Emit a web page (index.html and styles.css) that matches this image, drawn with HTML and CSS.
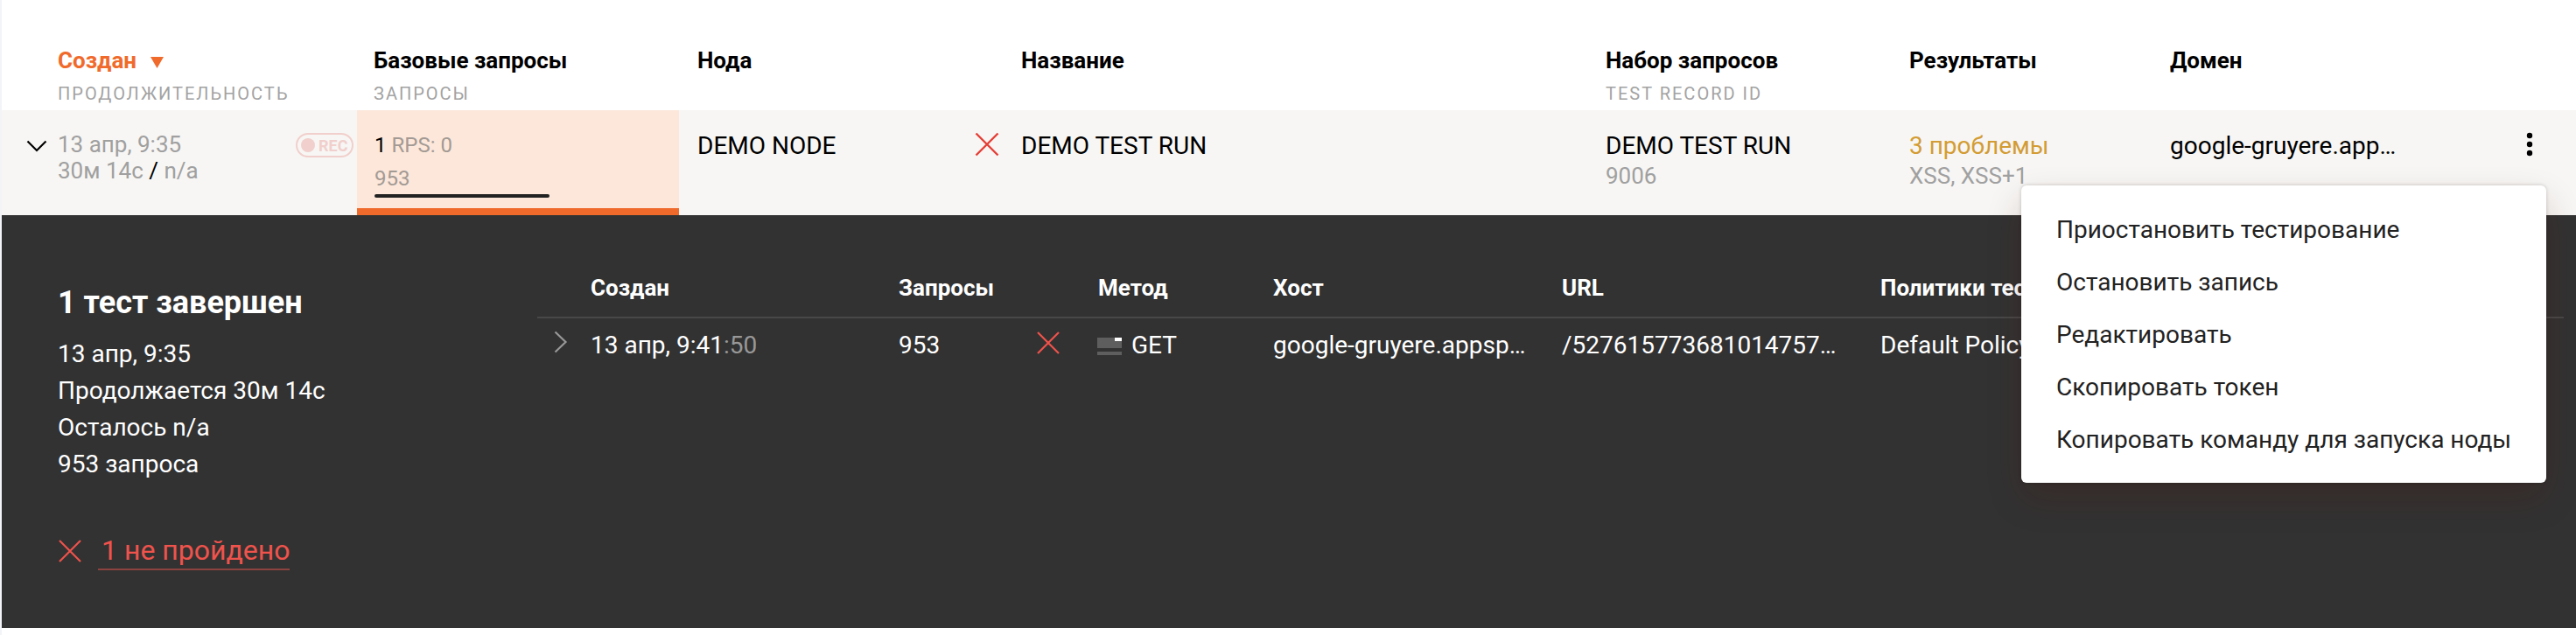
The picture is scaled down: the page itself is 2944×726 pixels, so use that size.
FILE: index.html
```html
<!DOCTYPE html>
<html lang="ru">
<head>
<meta charset="utf-8">
<title>Тесты</title>
<link rel="stylesheet" href="styles.css">
</head>
<body>
<div class="page">
  <div class="grid head">
    <div class="col-1"><div class="th sorted">Создан<svg class="sort" width="15" height="13" viewBox="0 0 15 13"><path d="M0 0H15L7.500 13Z" fill="#f06a2c"/></svg></div><div class="sub">ПРОДОЛЖИТЕЛЬНОСТЬ</div></div>
    <div class="col-2"><div class="th">Базовые запросы</div><div class="sub">ЗАПРОСЫ</div></div>
    <div class="th">Нода</div>
    <div class="th">Название</div>
    <div><div class="th">Набор запросов</div><div class="sub">TEST RECORD ID</div></div>
    <div class="th">Результаты</div>
    <div class="th">Домен</div>
  </div>

  <div class="grid row">
    <div class="created">
      <svg class="toggle" width="24" height="14" viewBox="0 0 24 14"><path d="M1.500 1.500L12 12L22.500 1.500" fill="none" stroke="#000" stroke-width="2.200"/></svg>
      <div class="created-text">13 апр, 9:35<br>30м 14с <b class="slash">/</b> n/a</div>
      <div class="rec"><span class="rec-dot"></span>REC</div>
    </div>
    <div class="baseline">
      <div class="rps"><b>1</b> RPS: 0</div>
      <div class="count">953</div>
      <div class="bar"></div>
    </div>
    <div class="cell node">DEMO NODE<svg class="fail" width="28" height="28" viewBox="0 0 28 28"><path d="M1.500 1.500L26.500 26.500M26.500 1.500L1.500 26.500" stroke="#e53e35" stroke-width="2.400"/></svg></div>
    <div class="cell">DEMO TEST RUN</div>
    <div class="cell">DEMO TEST RUN<div class="note">9006</div></div>
    <div class="cell"><span class="warn">3 проблемы</span><div class="note">XSS, XSS+1</div></div>
    <div class="cell">google-gruyere.app…</div>
    <div class="actions"><svg width="8" height="28" viewBox="0 0 8 28"><circle cx="4" cy="4" r="3.200"/><circle cx="4" cy="14" r="3.200"/><circle cx="4" cy="24" r="3.200"/></svg></div>
  </div>

  <div class="details">
    <div class="summary">
      <h2 class="title">1 тест завершен</h2>
      <div class="lines">13 апр, 9:35<br>Продолжается 30м 14с<br>Осталось n/a<br>953 запроса</div>
      <div class="failed">
        <svg width="26" height="26" viewBox="0 0 26 26"><path d="M1 1L25 25M25 1L1 25" stroke="#ef534c" stroke-width="2.200"/></svg>
        <span class="failed-link">1 не пройдено</span>
      </div>
    </div>
    <div class="tests">
      <div class="tgrid thead"><span></span><span>Создан</span><span>Запросы</span><span></span><span>Метод</span><span>Хост</span><span>URL</span><span>Политики тестирования</span></div>
      <div class="tgrid trow">
        <svg class="open" width="16" height="26" viewBox="0 0 16 26"><path d="M1.500 1.500L13.500 13L1.500 24.500" fill="none" stroke="#989898" stroke-width="2.200"/></svg>
        <span>13 апр, 9:41<i class="sec">:50</i></span>
        <span>953</span>
        <svg class="bad" width="26" height="26" viewBox="0 0 26 26"><path d="M1 1L25 25M25 1L1 25" stroke="#ef534c" stroke-width="2.200"/></svg>
        <span class="method"><svg width="28" height="20" viewBox="0 0 28 20"><path d="M0 0H28V12H0ZM0 16H28V20H0Z" fill="#5e5e5e"/><path d="M20 0H28V4H20Z" fill="#fff"/></svg>GET</span>
        <span>google-gruyere.appsp…</span>
        <span>/527615773681014757…</span>
        <span>Default Policy</span>
      </div>
    </div>
  </div>

  <div class="menu">
    <div class="item">Приостановить тестирование</div>
    <div class="item">Остановить запись</div>
    <div class="item">Редактировать</div>
    <div class="item">Скопировать токен</div>
    <div class="item">Копировать команду для запуска ноды</div>
  </div>
</div>
</body>
</html>
```
FILE: styles.css
```css
* { box-sizing: border-box; }
body { margin: 0; background: #fff; }
.page {
  position: relative;
  height: 726px;
  overflow: hidden;
  border-left: 2px solid #f3f4f8;
  font-family: Roboto, "Liberation Sans", sans-serif;
  font-size: 28px;
  color: #000;
  white-space: nowrap;
}
.grid {
  display: grid;
  grid-template-columns: 406px 389px 370px 668px 347px 298px 396px 68px;
}
.head { height: 126px; padding-top: 54px; }
.col-1 { padding-left: 64px; }
.col-2 { padding-left: 19px; }
.th { font-size: 26px; font-weight: 700; line-height: 30px; }
.sorted { color: #f06a2c; }
.sort { margin-left: 16px; }
.sub { margin-top: 11px; font-size: 20px; line-height: 24px; letter-spacing: 2px; color: #a3a3a3; }

.row { height: 120px; background: #f7f6f4; }
.created { display: flex; align-items: flex-start; padding: 23px 4px 0 28px; color: #a0a0a0; }
.toggle { margin: 11px 12px 0 0; }
.created-text { font-size: 26px; line-height: 30px; margin-top: 1px; }
.slash { font-weight: 400; color: #000; }
.rec {
  display: flex;
  align-items: center;
  gap: 4px;
  width: 66px;
  height: 28px;
  margin: 3px 0 0 auto;
  padding-left: 4px;
  border: 2px solid #f1cfcc;
  border-radius: 14px;
  font-size: 18px;
  font-weight: 700;
  color: #f1cfcc;
}
.rec-dot { width: 16px; height: 16px; border-radius: 50%; background: #f1cfcc; }
.baseline {
  width: 368px;
  height: 120px;
  padding: 26px 0 0 20px;
  border-bottom: 8px solid #f06a2c;
  background: #fce7da;
  font-size: 24px;
  line-height: 28px;
  color: #a39a94;
}
.rps b { font-weight: 400; color: #000; }
.count { margin-top: 10px; }
.bar { width: 200px; height: 4px; margin-top: 4px; border-radius: 2px; background: #222; }
.cell { padding-top: 24px; line-height: 34px; }
.node { display: flex; justify-content: space-between; }
.fail { margin: 1px 25px 0 0; }
.note { font-size: 26px; color: #a0a0a0; }
.warn { color: #d39c34; }
.actions { padding: 25px 0 0 11px; }

.details { display: flex; height: 472px; background: #323232; color: #fff; }
.summary { width: 612px; padding: 79px 0 0 64px; }
.title { margin: 0; font-size: 36px; line-height: 42px; font-weight: 700; }
.lines { margin-top: 17px; line-height: 42px; }
.failed { display: flex; align-items: center; gap: 19px; margin-top: 56px; padding-left: 1px; color: #ef534c; font-size: 32px; }
.failed-link { height: 44px; line-height: 42px; padding: 0 0 0 4px; border-bottom: 2px solid #8c4340; }
.tests { width: 2316px; padding-top: 68px; }
.tgrid { display: grid; grid-template-columns: 61px 352px 158px 70px 200px 330px 364px 1fr; }
.thead { height: 50px; border-bottom: 2px solid #484848; font-size: 26px; font-weight: 700; line-height: 30px; }
.trow { padding-top: 14px; line-height: 34px; }
.open { margin: 0 0 0 19px; }
.bad { margin: 1px 0 0; }
.sec { font-style: normal; color: #989898; }
.method svg { margin: 0 11px 0 -1px; vertical-align: -2px; }

.menu {
  position: absolute;
  left: 2308px;
  top: 212px;
  width: 600px;
  height: 340px;
  padding: 21px 40px;
  border-radius: 6px;
  background: #fff;
  color: #222;
  box-shadow: 0 0 4px rgba(0, 0, 0, .2), 0 18px 40px rgba(80, 20, 10, .2);
}
.item { line-height: 60px; }
```
